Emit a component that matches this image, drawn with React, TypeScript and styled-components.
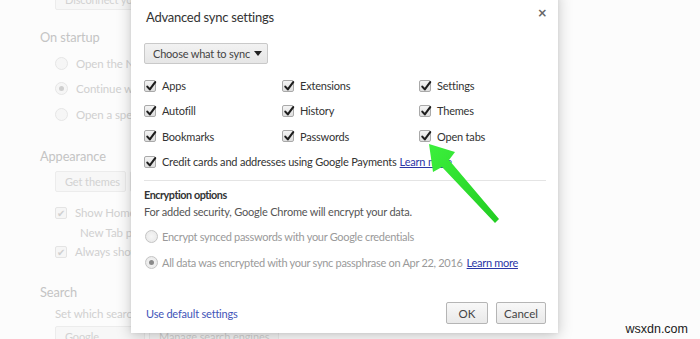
import React from "react";
import styled, { createGlobalStyle } from "styled-components";

const GlobalStyle = createGlobalStyle`
  html, body {
    margin: 0;
    padding: 0;
    background: #fcfcfc;
  }
  body {
    font-family: Lato, "Open Sans", Arial, sans-serif;
  }
`;

const Page = styled.div`
  position: relative;
  width: 700px;
  height: 339px;
  overflow: hidden;
  background: #fcfcfc;
`;

/* faded settings page behind the dialog */
const Settings = styled.div`
  display: flex;
  flex-direction: column;
  padding-left: 40px;
  color: #cfcfcf;
  font-size: 11px;
  letter-spacing: -0.1px;
`;

const GhostButton = styled.div<{ $width: number }>`
  display: flex;
  align-items: center;
  box-sizing: border-box;
  width: ${(p) => p.$width}px;
  height: 21px;
  padding-left: 9px;
  border: 1px solid #ececec;
  border-radius: 2px;
  background: #f7f7f7;
  color: #d2d2d2;
  font-size: 11px;
  white-space: nowrap;
  overflow: hidden;
`;

const ButtonRow = styled.div<{ $top: number }>`
  display: flex;
  gap: 4px;
  margin: ${(p) => p.$top}px 0 0 15px;
`;

const Heading = styled.div<{ $top: number }>`
  margin-top: ${(p) => p.$top}px;
  height: 20px;
  line-height: 20px;
  font-size: 12.8px;
  color: #c4c4c4;
`;

const GhostOption = styled.div<{ $top: number; $indent?: number }>`
  display: flex;
  align-items: center;
  gap: 8px;
  height: 18px;
  margin: ${(p) => p.$top}px 0 0 ${(p) => p.$indent ?? 15}px;
  white-space: nowrap;
  font-size: 11.5px;
  color: #d0d0d0;
`;

const GhostRadio = styled.span<{ $on?: boolean }>`
  position: relative;
  box-sizing: border-box;
  width: 13px;
  height: 13px;
  border-radius: 50%;
  border: 1px solid #e6e6e6;
  background: #f6f6f6;
  &::after {
    content: "";
    display: ${(p) => (p.$on ? "block" : "none")};
    position: absolute;
    left: 3px;
    top: 3px;
    width: 5px;
    height: 5px;
    border-radius: 50%;
    background: #cfcfcf;
  }
`;

const GhostCheck = styled.span`
  display: flex;
  align-items: center;
  justify-content: center;
  box-sizing: border-box;
  width: 12px;
  height: 12px;
  border: 1px solid #e4e4e4;
  border-radius: 2px;
  background: #f6f6f6;
  color: #d0d0d0;
  font-size: 10px;
`;

/* dialog */
const Dialog = styled.div`
  position: absolute;
  left: 131px;
  top: -10px;
  width: 427px;
  height: 343px;
  box-sizing: border-box;
  padding: 0 12px 0 13px;
  background: #fff;
  box-shadow: 0 3px 14px rgba(0, 0, 0, 0.22), 0 0 3px rgba(0, 0, 0, 0.08);
  display: flex;
  flex-direction: column;
  color: #333;
  font-size: 11px;
  letter-spacing: -0.2px;
`;

const TitleBar = styled.div`
  display: flex;
  justify-content: space-between;
  align-items: center;
  margin-top: 17px;
  height: 20px;
`;

const Title = styled.div`
  padding-left: 2px;
  font-size: 13px;
  letter-spacing: -0.25px;
  color: #333;
`;

const Close = styled.div`
  margin-right: -1px;
  margin-top: -9px;
  color: #666;
  font-size: 12px;
  font-weight: bold;
  font-family: "DejaVu Sans", sans-serif;
`;

const Select = styled.div`
  display: flex;
  align-items: center;
  justify-content: space-between;
  box-sizing: border-box;
  width: 124px;
  height: 21px;
  margin-top: 16px;
  padding: 0 5px 0 8px;
  border: 1px solid #c9c9c9;
  border-radius: 2px;
  background: linear-gradient(#f2f2f2, #e6e6e6);
  color: #444;
  white-space: nowrap;
`;

const Caret = styled.span`
  width: 0;
  height: 0;
  border-left: 4px solid transparent;
  border-right: 4px solid transparent;
  border-top: 5px solid #222;
`;

const Grid = styled.div`
  display: grid;
  grid-template-columns: 138px 137px 1fr;
  grid-auto-rows: 25.3px;
  margin-top: 9px;
`;

const Option = styled.label<{ $muted?: boolean }>`
  display: flex;
  align-items: center;
  gap: 6px;
  height: 25.3px;
  white-space: nowrap;
  color: ${(p) => (p.$muted ? "#9a9a9a" : "#333")};
`;

const Box = styled.span`
  position: relative;
  box-sizing: border-box;
  width: 12px;
  height: 12px;
  border: 1px solid #a9a9a9;
  border-radius: 2px;
  background: linear-gradient(#f4f4f4, #dedede);
  flex: none;
  svg {
    position: absolute;
    left: 0px;
    top: -1px;
  }
`;

const Link = styled.a<{ $color?: string; $plain?: boolean; $shift?: number }>`
  color: ${(p) => p.$color ?? "#2c36a6"};
  text-decoration: ${(p) => (p.$plain ? "none" : "underline")};
  margin-left: ${(p) => p.$shift ?? 0}px;
`;

const Separator = styled.div`
  height: 1px;
  margin: 6px 0 0 0;
  background: #e4e4e4;
`;

const SectionTitle = styled.div`
  margin-top: 5px;
  height: 17px;
  line-height: 17px;
  font-weight: 700;
  font-size: 10.8px;
  letter-spacing: -0.45px;
  color: #333;
`;

const Para = styled.div`
  height: 18px;
  line-height: 18px;
  color: #555;
`;

const RadioList = styled.div`
  display: flex;
  flex-direction: column;
  margin-top: 3px;
  letter-spacing: -0.3px;
  label {
    gap: 4px;
  }
`;

const Radio = styled.span<{ $on?: boolean }>`
  position: relative;
  box-sizing: border-box;
  width: 13px;
  height: 13px;
  margin-left: 1px;
  border-radius: 50%;
  border: 1px solid #c4c4c4;
  background: radial-gradient(#f6f6f6, #e6e6e6);
  flex: none;
  &::after {
    content: "";
    display: ${(p) => (p.$on ? "block" : "none")};
    position: absolute;
    left: 3px;
    top: 3px;
    width: 5px;
    height: 5px;
    border-radius: 50%;
    background: #8a8a8a;
  }
`;

const Footer = styled.div`
  display: flex;
  align-items: center;
  justify-content: space-between;
  margin-top: auto;
  margin-bottom: 9px;
  padding-left: 2px;
`;

const Buttons = styled.div`
  display: flex;
  gap: 8px;
`;

const Button = styled.button<{ $width: number }>`
  box-sizing: border-box;
  width: ${(p) => p.$width}px;
  height: 22px;
  padding: 0;
  border: 1px solid #b5b5b5;
  border-radius: 2px;
  background: linear-gradient(#f8f8f8, #e9e9e9);
  color: #444;
  font-family: inherit;
  font-size: 11.5px;
`;

const Watermark = styled.div`
  position: absolute;
  right: 12px;
  bottom: 3px;
  font-family: "Liberation Sans", Arial, sans-serif;
  font-size: 12.5px;
  color: #1a1a1a;
`;

const Arrow = styled.svg`
  position: absolute;
  left: 0;
  top: 0;
  pointer-events: none;
`;

const Check = () => (
  <svg width="13" height="13" viewBox="0 0 13 13">
    <path d="M2.3 6.6 L4.8 9.4 L10.2 2.2" fill="none" stroke="#1e1e1e" strokeWidth="2.1" strokeLinecap="round" strokeLinejoin="round" />
  </svg>
);

const CheckItem = ({ label, children }: { label: string; children?: React.ReactNode }) => (
  <Option>
    <Box>
      <Check />
    </Box>
    {label}
    {children}
  </Option>
);

export default function App() {
  return (
    <Page>
      <GlobalStyle />
      <Settings>
        <ButtonRow $top={-11}>
          <GhostButton $width={130}>Disconnect your Google Account...</GhostButton>
        </ButtonRow>
        <Heading $top={17}>On startup</Heading>
        <GhostOption $top={7}>
          <GhostRadio />
          Open the New Tab page
        </GhostOption>
        <GhostOption $top={7.5}>
          <GhostRadio $on />
          Continue where you left off
        </GhostOption>
        <GhostOption $top={8}>
          <GhostRadio />
          Open a specific page or set of pages.
        </GhostOption>
        <Heading $top={22}>Appearance</Heading>
        <ButtonRow $top={5}>
          <GhostButton $width={71}>Get themes</GhostButton>
          <GhostButton $width={120}>Reset to default theme</GhostButton>
        </ButtonRow>
        <GhostOption $top={12}>
          <GhostCheck>✔</GhostCheck>
          Show Home button
        </GhostOption>
        <GhostOption $top={2} $indent={40}>
          New Tab page
        </GhostOption>
        <GhostOption $top={1}>
          <GhostCheck>✔</GhostCheck>
          Always show the bookmarks bar
        </GhostOption>
        <Heading $top={21}>Search</Heading>
        <GhostOption $top={3} $indent={15}>
          Set which search engine is used when searching from the omnibox.
        </GhostOption>
        <ButtonRow $top={3}>
          <GhostButton $width={90}>Google</GhostButton>
          <GhostButton $width={130}>Manage search engines...</GhostButton>
        </ButtonRow>
      </Settings>

      <Dialog>
        <TitleBar>
          <Title>Advanced sync settings</Title>
          <Close>×</Close>
        </TitleBar>
        <Select>
          Choose what to sync
          <Caret />
        </Select>
        <Grid>
          <CheckItem label="Apps" />
          <CheckItem label="Extensions" />
          <CheckItem label="Settings" />
          <CheckItem label="Autofill" />
          <CheckItem label="History" />
          <CheckItem label="Themes" />
          <CheckItem label="Bookmarks" />
          <CheckItem label="Passwords" />
          <CheckItem label="Open tabs" />
        </Grid>
        <CheckItem label="Credit cards and addresses using Google Payments">
          <Link $shift={-3}>Learn more</Link>
        </CheckItem>
        <Separator />
        <SectionTitle>Encryption options</SectionTitle>
        <Para>For added security, Google Chrome will encrypt your data.</Para>
        <RadioList>
          <Option $muted>
            <Radio />
            Encrypt synced passwords with your Google credentials
          </Option>
          <Option $muted>
            <Radio $on />
            All data was encrypted with your sync passphrase on Apr 22, 2016
            <Link $color="#2c36a6">Learn more</Link>
          </Option>
        </RadioList>
        <Footer>
          <Link $color="#4254b8" $plain>
            Use default settings
          </Link>
          <Buttons>
            <Button $width={42}>OK</Button>
            <Button $width={50}>Cancel</Button>
          </Buttons>
        </Footer>
      </Dialog>

      <Arrow width="700" height="339" viewBox="0 0 700 339">
        <defs>
          <linearGradient id="g" x1="0" y1="0" x2="1" y2="1">
            <stop offset="0" stopColor="#3cf03c" />
            <stop offset="1" stopColor="#22cc22" />
          </linearGradient>
        </defs>
        <polygon
          points="429,144 455,152 449,160 499,219 495,223 442,167 433,172"
          fill="url(#g)"
        />
      </Arrow>

      <Watermark>wsxdn.com</Watermark>
    </Page>
  );
}
